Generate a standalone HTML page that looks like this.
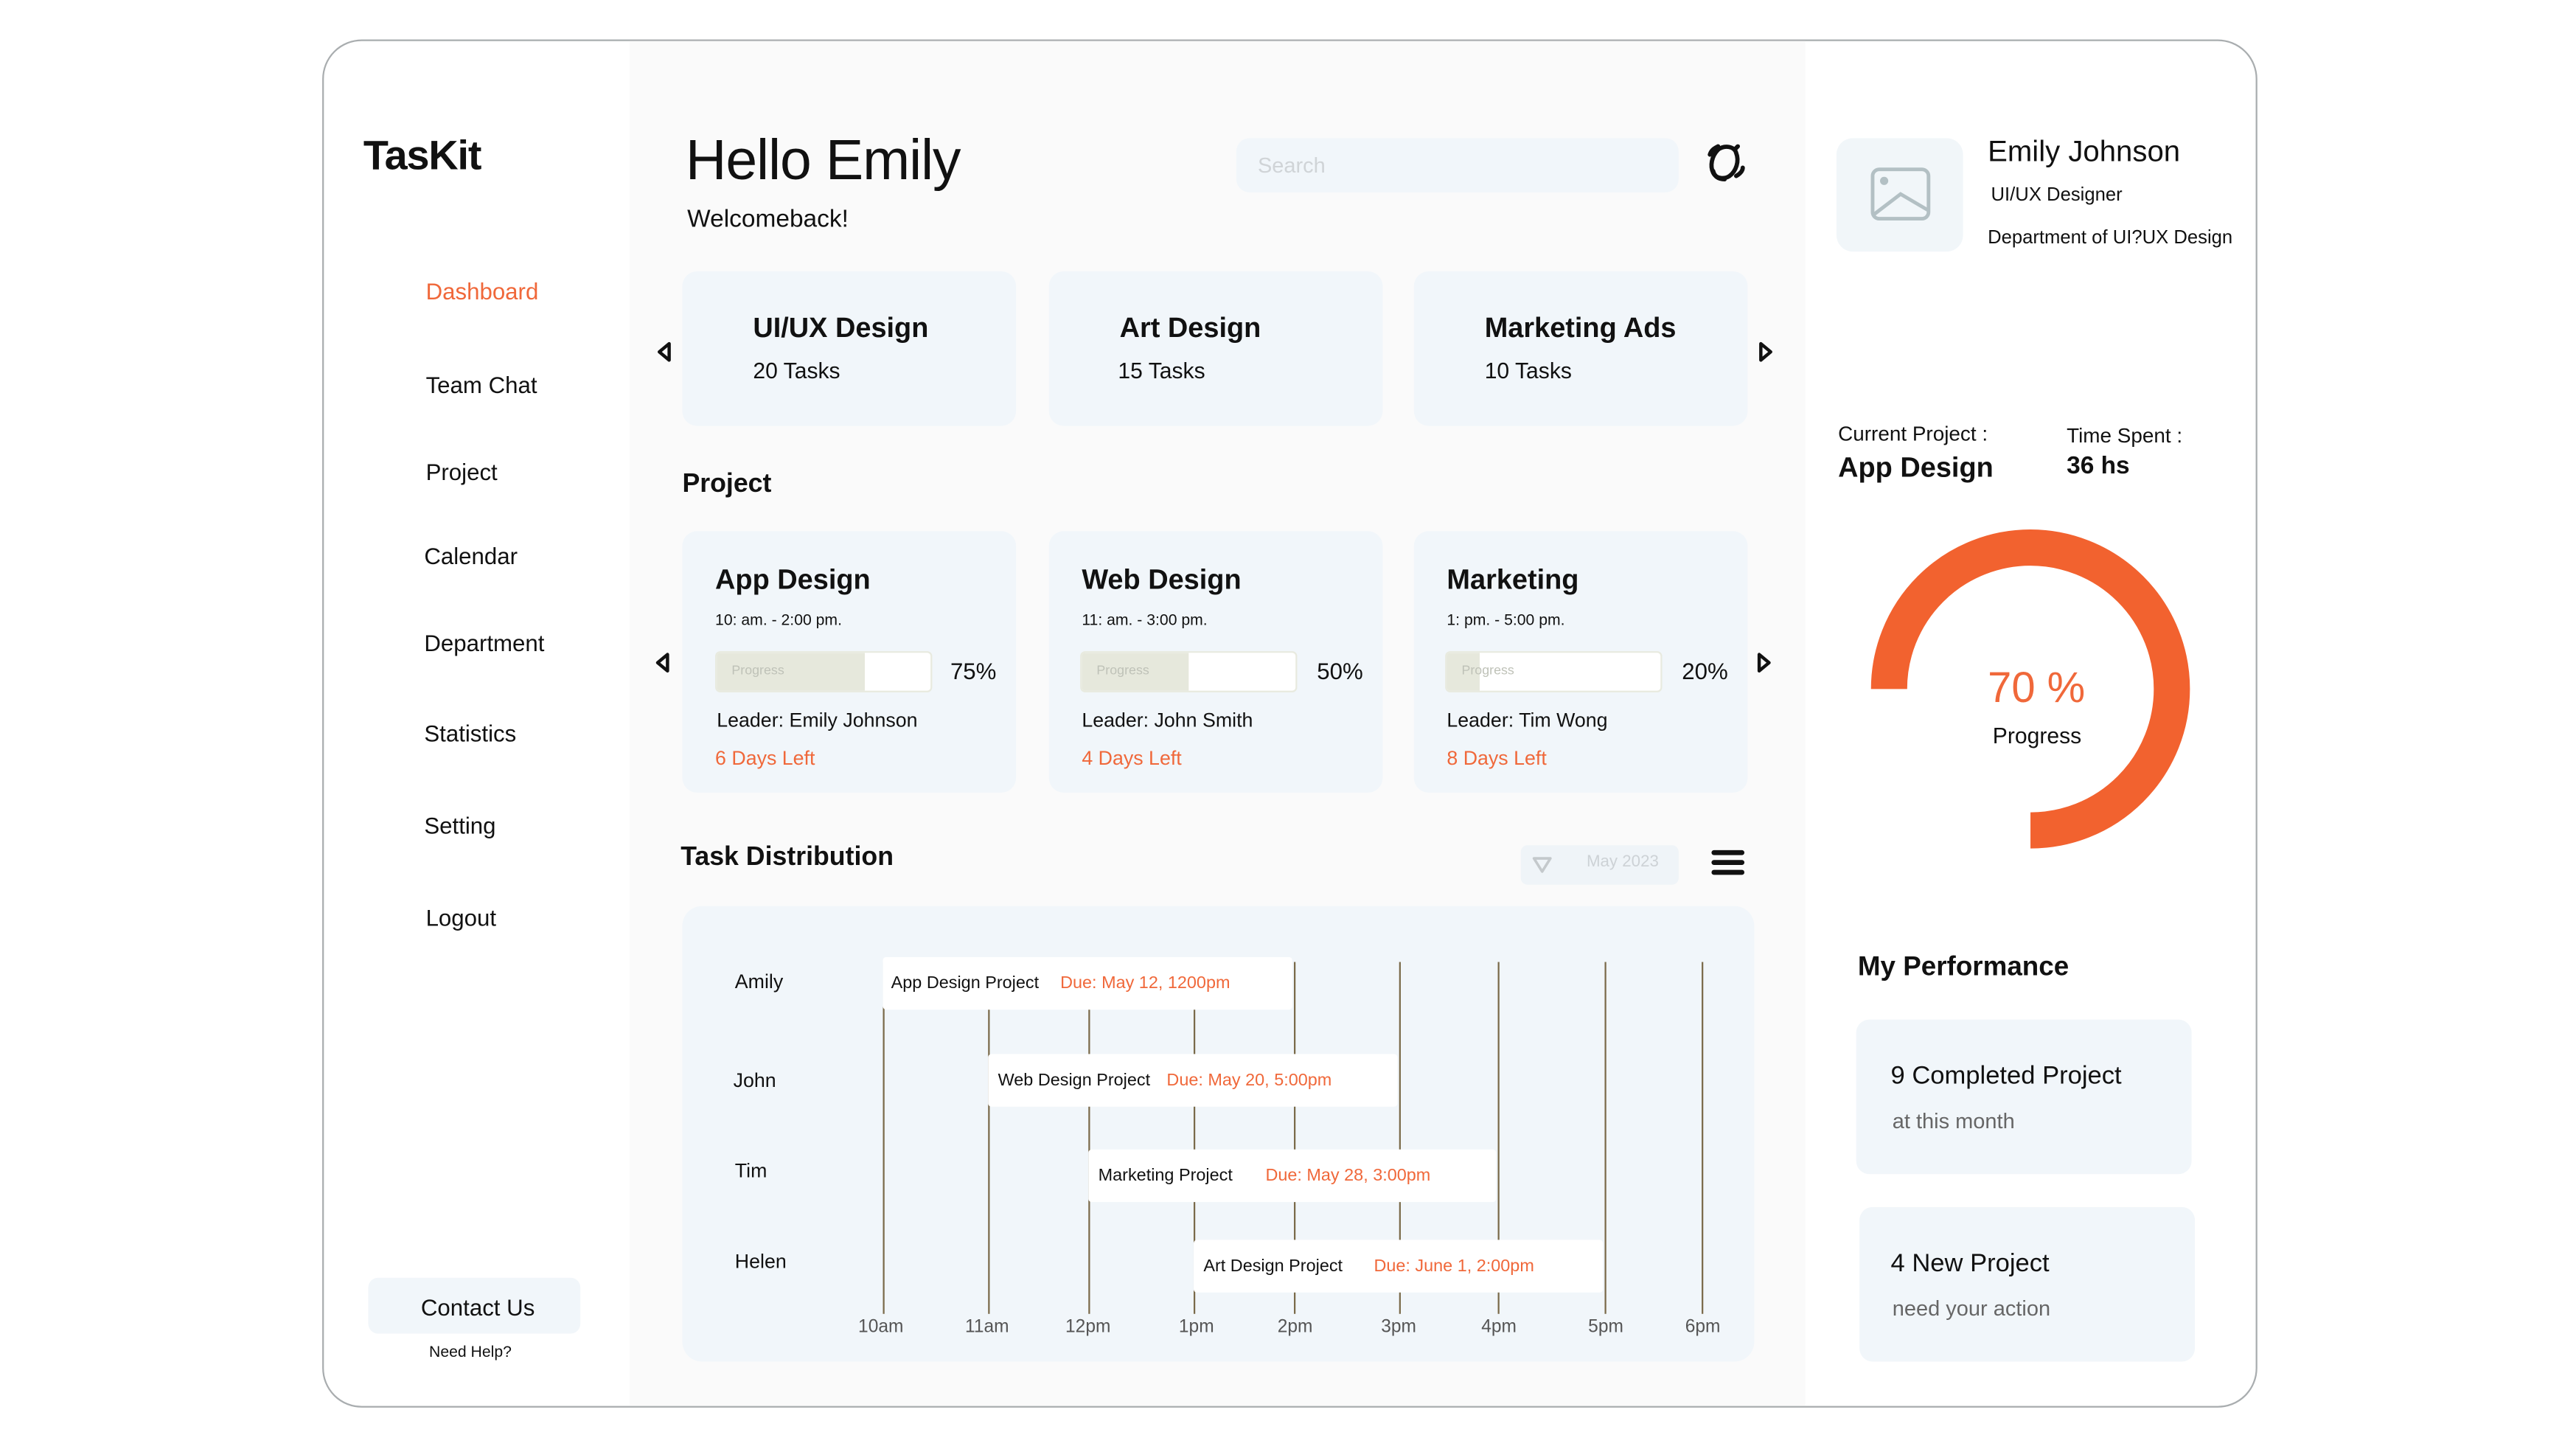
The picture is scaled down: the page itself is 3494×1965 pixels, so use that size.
<!DOCTYPE html>
<html><head><meta charset="utf-8">
<style>
html,body{margin:0;padding:0;background:#fff;}
body{width:3494px;height:1965px;overflow:hidden;position:relative;}
#w{position:absolute;left:0;top:0;width:1567px;height:881px;transform:scale(2.23);transform-origin:0 0;font-family:"Liberation Sans",sans-serif;color:#111;}
.a{position:absolute;white-space:nowrap;}
.frame{position:absolute;left:196px;top:24px;width:1175px;height:830px;border:1.3px solid #a9adaf;border-radius:24px;overflow:hidden;background:#fff;}
.mid{position:absolute;left:186px;top:0;width:715px;height:830px;background:#fafafa;}
.card{position:absolute;background:#f1f6fa;border-radius:9px;}
.b{font-weight:bold;}
.org{color:#f0683a;}
.tl{position:absolute;width:1px;background:#7a6a4a;}
.bar{position:absolute;background:#fff;height:32px;border-radius:2px;font-size:10.5px;line-height:32px;}
.pb{position:absolute;width:130px;height:23px;background:#fff;border:1px solid #e8eadf;border-radius:3px;overflow:hidden;}
.pb i{position:absolute;left:0;top:0;bottom:0;background:#e6e8dc;}
.pb span{position:absolute;left:9px;top:6px;font-size:8px;color:#bfc2b8;}
</style></head><body><div id="w">
<div class="frame"><div class="mid"></div></div>

<!-- sidebar -->
<div class="a b" style="left:221px;top:81px;font-size:25px;letter-spacing:-0.5px;">TasKit</div>
<div class="a org" style="left:259px;top:169px;font-size:14px;">Dashboard</div>
<div class="a" style="left:259px;top:226px;font-size:14px;">Team Chat</div>
<div class="a" style="left:259px;top:279px;font-size:14px;">Project</div>
<div class="a" style="left:258px;top:330px;font-size:14px;">Calendar</div>
<div class="a" style="left:258px;top:383px;font-size:14px;">Department</div>
<div class="a" style="left:258px;top:438px;font-size:14px;">Statistics</div>
<div class="a" style="left:258px;top:494px;font-size:14px;">Setting</div>
<div class="a" style="left:259px;top:550px;font-size:14px;">Logout</div>
<div class="card" style="left:224px;top:777px;width:129px;height:34px;border-radius:6px;"></div>
<div class="a" style="left:256px;top:787px;font-size:14px;">Contact Us</div>
<div class="a" style="left:261px;top:817px;font-size:9.5px;">Need Help?</div>

<!-- header -->
<div class="a" style="left:417px;top:79px;font-size:34.5px;letter-spacing:-0.5px;">Hello Emily</div>
<div class="a" style="left:418px;top:125px;font-size:15px;">Welcomeback!</div>
<div class="card" style="left:752px;top:84px;width:269px;height:33px;border-radius:8px;"></div>
<div class="a" style="left:765px;top:93px;font-size:13px;color:#d0d4d7;">Search</div>
<svg class="a" style="left:1036px;top:85px;" width="28" height="28" viewBox="0 0 28 28" fill="none" stroke="#111" stroke-width="2.6" stroke-linecap="round">
<path d="M9 6 C13 3 19 4 20 8 C22 13 20 19 16 22 C13 24 8 24 6 20 C4 16 5 10 9 6Z"/>
<path d="M4 9 C5 6 7 5 9 4"/><path d="M6 19 C7 23 10 24 13 24"/><path d="M20 22 C22 21 24 19 24 17"/><path d="M19 6 L21 4"/>
</svg>

<!-- top cards -->
<svg class="a" style="left:398px;top:207px;" width="12" height="14" viewBox="0 0 12 14"><path d="M9 2 L3 7 L9 12Z" fill="none" stroke="#111" stroke-width="2" stroke-linejoin="round"/></svg>
<svg class="a" style="left:1068px;top:207px;" width="12" height="14" viewBox="0 0 12 14"><path d="M3 2 L9 7 L3 12Z" fill="none" stroke="#111" stroke-width="2" stroke-linejoin="round"/></svg>
<div class="card" style="left:415px;top:165px;width:203px;height:94px;"></div>
<div class="card" style="left:638px;top:165px;width:203px;height:94px;"></div>
<div class="card" style="left:860px;top:165px;width:203px;height:94px;"></div>
<div class="a b" style="left:458px;top:190px;font-size:17px;">UI/UX Design</div>
<div class="a" style="left:458px;top:218px;font-size:13.5px;">20 Tasks</div>
<div class="a b" style="left:681px;top:190px;font-size:17px;">Art Design</div>
<div class="a" style="left:680px;top:218px;font-size:13.5px;">15 Tasks</div>
<div class="a b" style="left:903px;top:190px;font-size:17px;">Marketing Ads</div>
<div class="a" style="left:903px;top:218px;font-size:13.5px;">10 Tasks</div>

<!-- project -->
<div class="a b" style="left:415px;top:286px;font-size:16px;">Project</div>
<svg class="a" style="left:397px;top:396px;" width="12" height="14" viewBox="0 0 12 14"><path d="M9 2 L3 7 L9 12Z" fill="none" stroke="#111" stroke-width="2" stroke-linejoin="round"/></svg>
<svg class="a" style="left:1067px;top:396px;" width="12" height="14" viewBox="0 0 12 14"><path d="M3 2 L9 7 L3 12Z" fill="none" stroke="#111" stroke-width="2" stroke-linejoin="round"/></svg>

<div class="card" style="left:415px;top:323px;width:203px;height:159px;"></div>
<div class="card" style="left:638px;top:323px;width:203px;height:159px;"></div>
<div class="card" style="left:860px;top:323px;width:203px;height:159px;"></div>

<div class="a b" style="left:435px;top:343px;font-size:17px;">App Design</div>
<div class="a" style="left:435px;top:372px;font-size:9.5px;">10: am. - 2:00 pm.</div>
<div class="pb" style="left:435px;top:396px;"><i style="width:90px"></i><span>Progress</span></div>
<div class="a" style="left:578px;top:400px;font-size:14px;">75%</div>
<div class="a" style="left:436px;top:431px;font-size:12px;">Leader: Emily Johnson</div>
<div class="a org" style="left:435px;top:454px;font-size:12px;">6 Days Left</div>

<div class="a b" style="left:658px;top:343px;font-size:17px;">Web Design</div>
<div class="a" style="left:658px;top:372px;font-size:9.5px;">11: am. - 3:00 pm.</div>
<div class="pb" style="left:657px;top:396px;"><i style="width:65px"></i><span>Progress</span></div>
<div class="a" style="left:801px;top:400px;font-size:14px;">50%</div>
<div class="a" style="left:658px;top:431px;font-size:12px;">Leader: John Smith</div>
<div class="a org" style="left:658px;top:454px;font-size:12px;">4 Days Left</div>

<div class="a b" style="left:880px;top:343px;font-size:17px;">Marketing</div>
<div class="a" style="left:880px;top:372px;font-size:9.5px;">1: pm. - 5:00 pm.</div>
<div class="pb" style="left:879px;top:396px;"><i style="width:20px"></i><span>Progress</span></div>
<div class="a" style="left:1023px;top:400px;font-size:14px;">20%</div>
<div class="a" style="left:880px;top:431px;font-size:12px;">Leader: Tim Wong</div>
<div class="a org" style="left:880px;top:454px;font-size:12px;">8 Days Left</div>

<!-- task distribution -->
<div class="a b" style="left:414px;top:513px;font-size:16px;">Task Distribution</div>
<div class="card" style="left:925px;top:514px;width:96px;height:24px;border-radius:4px;background:#eff4f8;"></div>
<svg class="a" style="left:931px;top:520px;" width="14" height="12" viewBox="0 0 14 12"><path d="M2 2 H12 L7 10Z" fill="none" stroke="#c4c9cc" stroke-width="1.6" stroke-linejoin="round"/></svg>
<div class="a" style="left:965px;top:519px;font-size:10px;color:#cdd2d6;">May 2023</div>
<div class="a" style="left:1041px;top:517px;width:20px;height:3px;background:#111;border-radius:2px;"></div>
<div class="a" style="left:1041px;top:523px;width:20px;height:3px;background:#111;border-radius:2px;"></div>
<div class="a" style="left:1041px;top:529px;width:20px;height:3px;background:#111;border-radius:2px;"></div>

<div class="card" style="left:415px;top:551px;width:652px;height:277px;border-radius:12px;"></div>
<div class="tl" style="left:537px;top:585px;height:214px;"></div>
<div class="tl" style="left:601px;top:585px;height:214px;"></div>
<div class="tl" style="left:662px;top:585px;height:214px;"></div>
<div class="tl" style="left:726px;top:585px;height:214px;"></div>
<div class="tl" style="left:787px;top:585px;height:214px;"></div>
<div class="tl" style="left:851px;top:585px;height:214px;"></div>
<div class="tl" style="left:911px;top:585px;height:214px;"></div>
<div class="tl" style="left:976px;top:585px;height:214px;"></div>
<div class="tl" style="left:1035px;top:585px;height:214px;"></div>

<div class="bar" style="left:537px;top:582px;width:249px;"><span style="margin-left:5px;">App Design Project</span><span class="org" style="margin-left:13px;">Due: May 12, 1200pm</span></div>
<div class="bar" style="left:601px;top:641px;width:249px;"><span style="margin-left:6px;">Web Design Project</span><span class="org" style="margin-left:10px;">Due: May 20, 5:00pm</span></div>
<div class="bar" style="left:662px;top:699px;width:248px;"><span style="margin-left:6px;">Marketing Project</span><span class="org" style="margin-left:20px;">Due: May 28, 3:00pm</span></div>
<div class="bar" style="left:726px;top:754px;width:249px;"><span style="margin-left:6px;">Art Design Project</span><span class="org" style="margin-left:19px;">Due: June 1, 2:00pm</span></div>

<div class="a" style="left:447px;top:590px;font-size:12px;">Amily</div>
<div class="a" style="left:446px;top:650px;font-size:12px;">John</div>
<div class="a" style="left:447px;top:705px;font-size:12px;">Tim</div>
<div class="a" style="left:447px;top:760px;font-size:12px;">Helen</div>

<div class="a" style="left:522px;top:801px;font-size:11px;color:#555;">10am</div>
<div class="a" style="left:587px;top:801px;font-size:11px;color:#555;">11am</div>
<div class="a" style="left:648px;top:801px;font-size:11px;color:#555;">12pm</div>
<div class="a" style="left:717px;top:801px;font-size:11px;color:#555;">1pm</div>
<div class="a" style="left:777px;top:801px;font-size:11px;color:#555;">2pm</div>
<div class="a" style="left:840px;top:801px;font-size:11px;color:#555;">3pm</div>
<div class="a" style="left:901px;top:801px;font-size:11px;color:#555;">4pm</div>
<div class="a" style="left:966px;top:801px;font-size:11px;color:#555;">5pm</div>
<div class="a" style="left:1025px;top:801px;font-size:11px;color:#555;">6pm</div>

<!-- right panel -->
<div class="card" style="left:1117px;top:84px;width:77px;height:69px;border-radius:10px;background:#f1f6f9;"></div>
<svg class="a" style="left:1136px;top:100px;" width="40" height="36" viewBox="0 0 40 36" fill="none" stroke="#b3c0c4" stroke-width="2.2"><rect x="3" y="3" width="34" height="30" rx="4"/><circle cx="10" cy="10" r="2.5" fill="#b3c0c4" stroke="none"/><path d="M3 31 L20 18 L37 28"/></svg>
<div class="a" style="left:1209px;top:82px;font-size:18px;">Emily Johnson</div>
<div class="a" style="left:1211px;top:113px;font-size:11.5px;">UI/UX Designer</div>
<div class="a" style="left:1209px;top:139px;font-size:11.5px;">Department of UI?UX Design</div>

<div class="a" style="left:1118px;top:257px;font-size:12.5px;">Current Project :</div>
<div class="a b" style="left:1118px;top:275px;font-size:17px;">App Design</div>
<div class="a" style="left:1257px;top:258px;font-size:12.5px;">Time Spent :</div>
<div class="a b" style="left:1257px;top:275px;font-size:15px;">36 hs</div>

<svg class="a" style="left:1130px;top:314px;" width="210" height="210" viewBox="0 0 210 210">
<path d="M19 105 A86 86 0 1 1 105 191" fill="none" stroke="#f2622f" stroke-width="22"/>
</svg>
<div class="a org" style="left:1209px;top:403px;font-size:26px;">70 %</div>
<div class="a" style="left:1212px;top:440px;font-size:13.5px;">Progress</div>

<div class="a b" style="left:1130px;top:579px;font-size:16.5px;">My Performance</div>
<div class="card" style="left:1129px;top:620px;width:204px;height:94px;border-radius:8px;"></div>
<div class="card" style="left:1131px;top:734px;width:204px;height:94px;border-radius:8px;"></div>
<div class="a" style="left:1150px;top:646px;font-size:15.5px;">9 Completed Project</div>
<div class="a" style="left:1151px;top:674px;font-size:13px;color:#666;">at this month</div>
<div class="a" style="left:1150px;top:760px;font-size:15.5px;">4 New Project</div>
<div class="a" style="left:1151px;top:788px;font-size:13px;color:#666;">need your action</div>
</div></body></html>
